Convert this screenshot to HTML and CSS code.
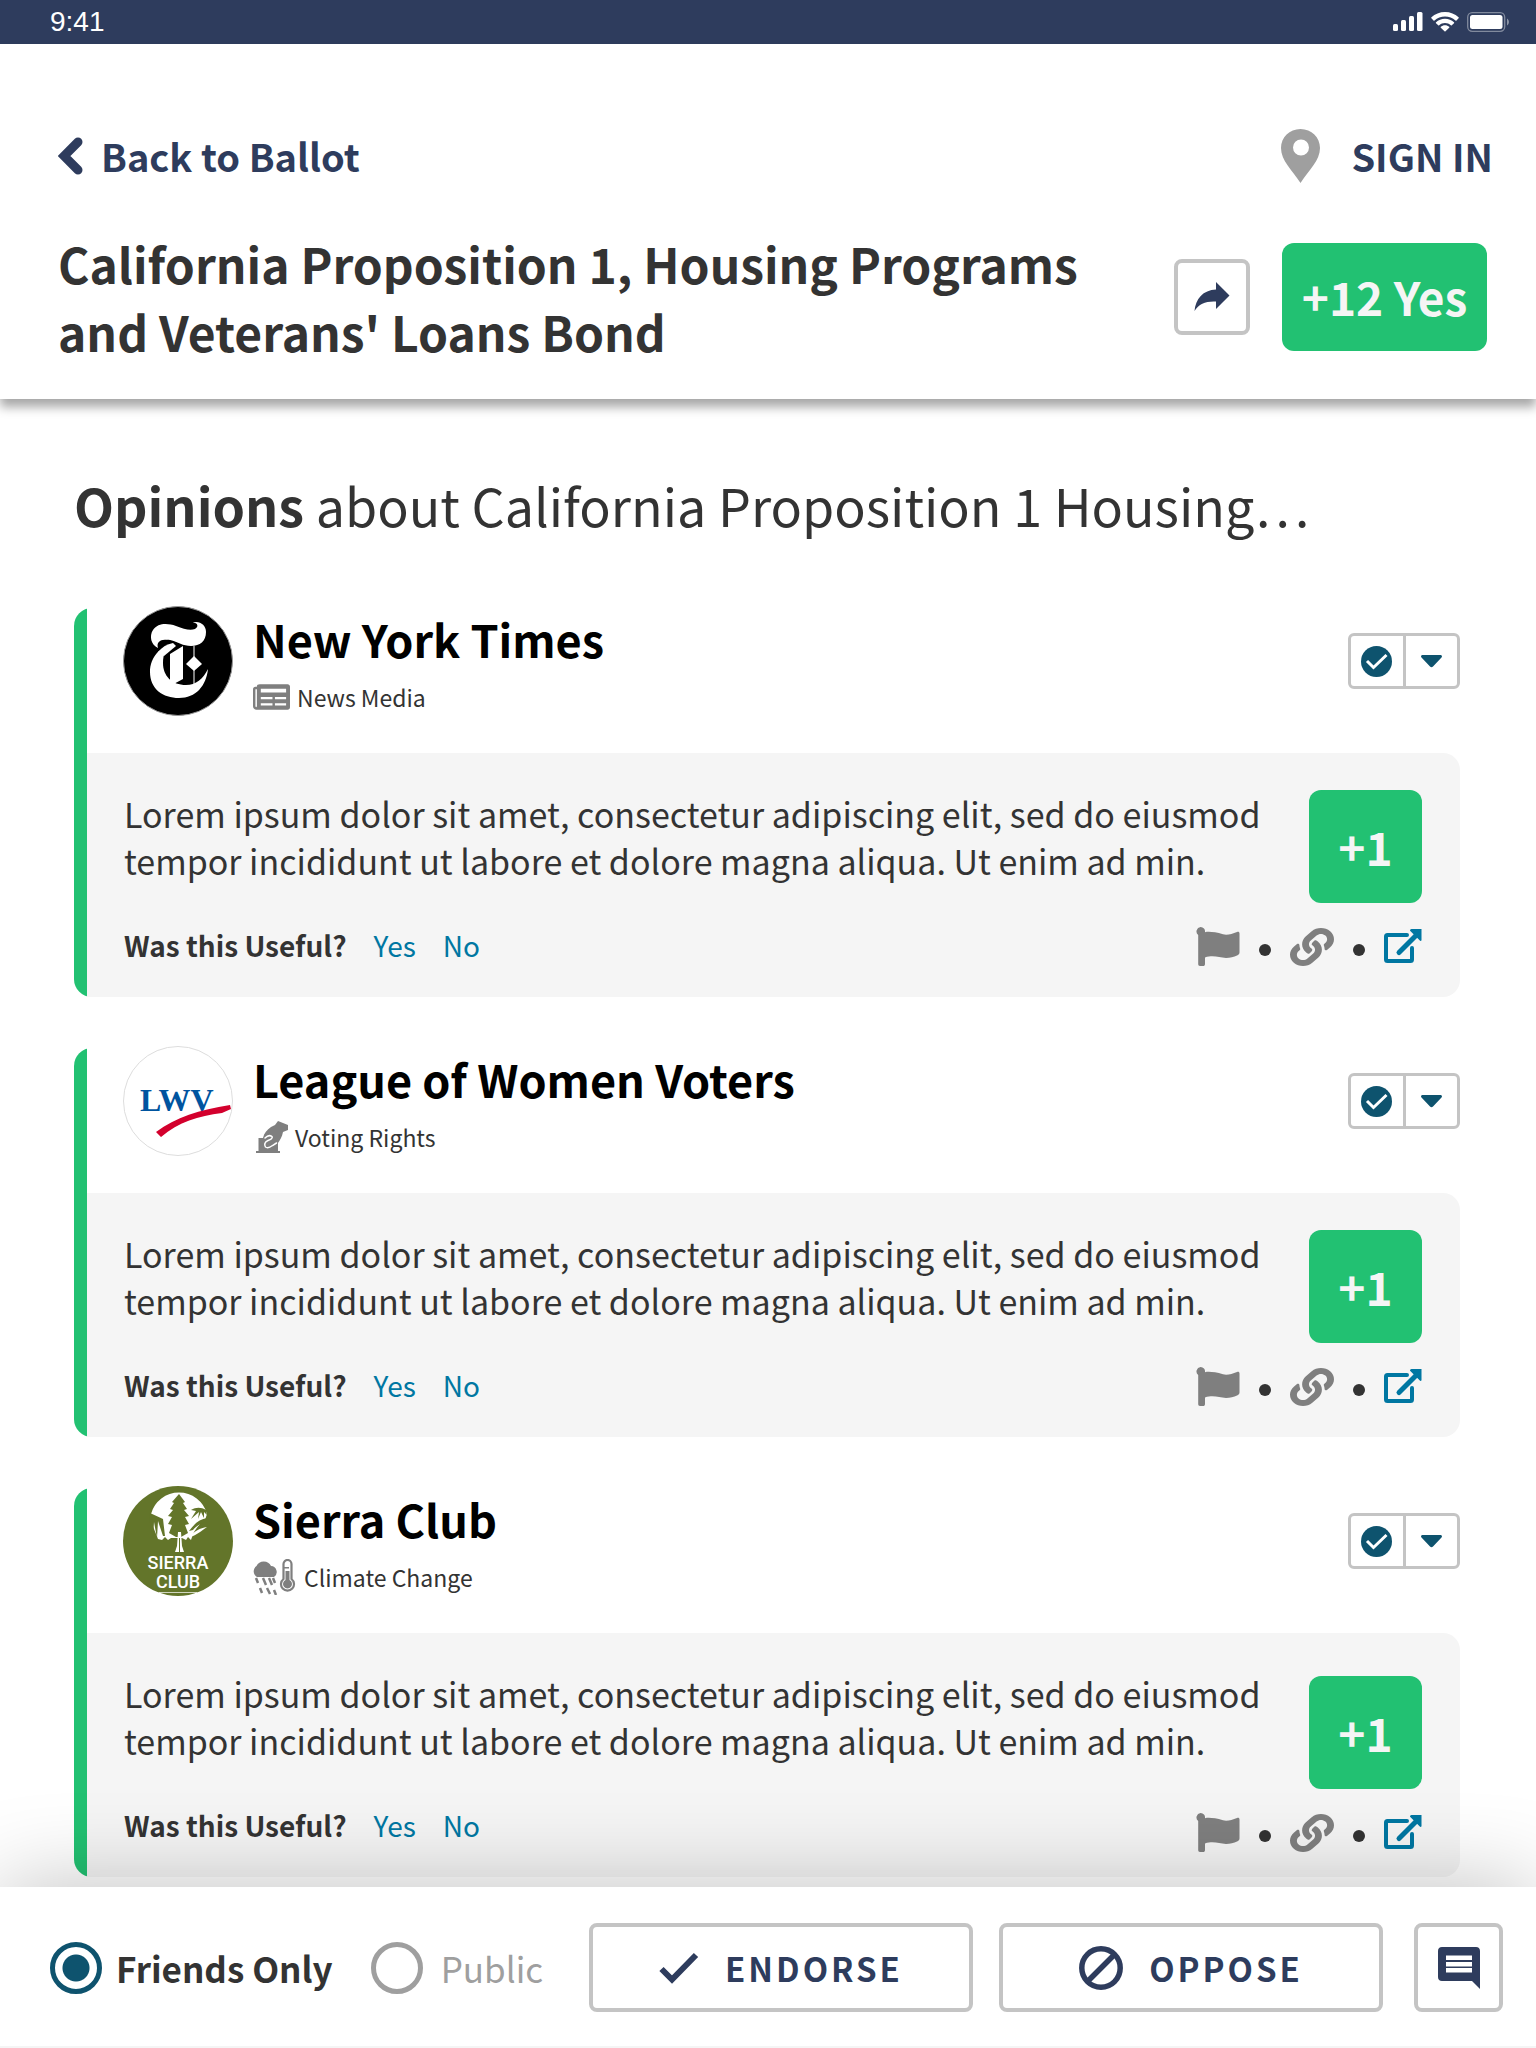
FILE: index.html
```html
<!DOCTYPE html>
<html lang="en">
<head>
<meta charset="utf-8">
<meta name="viewport" content="width=device-width, initial-scale=1">
<title>California Proposition 1</title>
<link rel="stylesheet" href="styles.css">
</head>
<body>
<svg class="sprite" aria-hidden="true">
  <symbol id="i-flag" viewBox="0 0 44 39"><path d="M4.500 0a4.500 4.500 0 0 1 4.500 5.200C13 4.400 19 5 27 7.300c4 1 9-.2 14-2.300 1.500-.5 2.500 0 2.500 1.500V25.500c0 1.500-1 2.300-2.500 3-3 1.500-7 2.400-11 2.400-7-.2-12-3-21-.5V37c0 1.500-.8 2-1.800 2H4c-1.200 0-1.800-.8-1.800-2V8A4.500 4.500 0 0 1 4.500 0z"/></symbol>
  <symbol id="i-link" viewBox="0 0 512 512" preserveAspectRatio="none"><path d="M326.612 185.391c59.747 59.809 58.927 155.698.36 214.59-.11.12-.24.25-.36.37l-67.2 67.2c-59.27 59.27-155.699 59.262-214.96 0-59.27-59.26-59.27-155.7 0-214.96l37.106-37.106c9.840-9.840 26.786-3.300 27.294 10.606.648 17.722 3.826 35.527 9.690 52.721 1.986 5.822.567 12.262-3.783 16.612l-13.087 13.087c-28.026 28.026-28.905 73.660-1.155 101.960 28.024 28.579 74.086 28.749 102.325.510l67.200-67.190c28.191-28.191 28.073-73.757 0-101.830-3.701-3.694-7.429-6.564-10.341-8.569a16.037 16.037 0 0 1-6.947-12.606c-.396-10.567 3.348-21.456 11.698-29.806l21.054-21.055c5.521-5.521 14.182-6.199 20.584-1.731a152.482 152.482 0 0 1 20.522 17.197zM467.547 44.449c-59.261-59.262-155.690-59.270-214.960 0l-67.200 67.200c-.120.120-.250.250-.360.370-58.566 58.892-59.387 154.781.360 214.590a152.454 152.454 0 0 0 20.521 17.196c6.402 4.468 15.064 3.789 20.584-1.731l21.054-21.055c8.350-8.350 12.094-19.239 11.698-29.806a16.037 16.037 0 0 0-6.947-12.606c-2.912-2.005-6.640-4.875-10.341-8.569-28.073-28.073-28.191-73.639 0-101.830l67.200-67.190c28.239-28.239 74.300-28.069 102.325.510 27.750 28.300 26.872 73.934-1.155 101.960l-13.087 13.087c-4.350 4.350-5.769 10.790-3.783 16.612 5.864 17.194 9.042 34.999 9.690 52.721.509 13.906 17.454 20.446 27.294 10.606l37.106-37.106c59.271-59.259 59.271-155.699.001-214.959z"/></symbol>
  <symbol id="i-external" viewBox="0 0 38 35"><path d="M23 6H3.500C2.600 6 2 6.600 2 7.500v23c0 .9.600 1.500 1.500 1.500h23c.9 0 1.500-.6 1.500-1.500V19" fill="none" stroke="currentColor" stroke-width="4" stroke-linecap="round"/><path d="M15 23.500L33 5.500" fill="none" stroke="currentColor" stroke-width="5" stroke-linecap="round"/><path d="M27.500 0H37.500v11c0 1-1 1.300-1.700.6l-9.500-9.500C25.500 1.200 26.500 0 27.500 0z"/></symbol>
  <symbol id="i-check-circle" viewBox="0 0 31 31"><circle cx="15.500" cy="15.500" r="15.500"/><path d="M6 15l6.500 6.500L25.500 9" fill="none" stroke="#fff" stroke-width="3"/></symbol>
  <symbol id="i-caret" viewBox="0 0 21 13"><path d="M1.500 0h18c1.300 0 2 1.500 1 2.500l-8.500 9c-1 1-2 1-3 0L.500 2.500C-.5 1.500.200 0 1.500 0z"/></symbol>
</svg>

<div class="status">
  <span class="status-time">9:41</span>
  <div class="status-icons">
    <svg width="30" height="20" viewBox="0 0 30 20"><rect x="0" y="12" width="5" height="7" rx="1.500"/><rect x="8" y="8" width="5" height="11" rx="1.500"/><rect x="16" y="4" width="5" height="15" rx="1.500"/><rect x="24" y="0" width="5.500" height="19" rx="1.500"/></svg>
    <svg width="28" height="20" viewBox="0 0 28 20"><path d="M14 0c5.300 0 10 2 13.600 5.300.3.300.3.700 0 1L25.500 8.500c-.3.300-.7.300-1 0C21.700 5.900 18 4.400 14 4.400S6.300 5.900 3.500 8.500c-.3.300-.7.300-1 0L.400 6.300c-.3-.3-.3-.7 0-1C4 2 8.700 0 14 0z"/><path d="M14 6.700c3.500 0 6.600 1.300 9 3.500.3.300.3.700 0 1l-2.200 2.100c-.3.300-.7.300-1 0-1.600-1.400-3.600-2.200-5.800-2.200s-4.200.8-5.800 2.200c-.3.300-.7.300-1 0L5 11.200c-.3-.3-.3-.7 0-1 2.400-2.200 5.500-3.500 9-3.500z"/><path d="M14 13.300c1.600 0 3.100.6 4.200 1.500.3.300.3.700 0 1l-3.700 3.500c-.3.300-.7.300-1 0l-3.700-3.500c-.3-.3-.3-.7 0-1 1.100-.9 2.600-1.500 4.200-1.500z"/></svg>
    <svg width="43" height="20" viewBox="0 0 43 20"><rect x=".7" y=".7" width="37" height="18.600" rx="4.500" fill="none" stroke="#fff" stroke-opacity=".4" stroke-width="1.300"/><rect x="3" y="3" width="32.500" height="14" rx="2.500"/><path d="M40 6.500c2.600 1.500 2.600 5.500 0 7z" fill-opacity=".45"/></svg>
  </div>
</div>

<header class="header">
  <nav class="nav">
    <a class="back" href="#ballot"><svg width="25" height="38" viewBox="0 0 25 38"><path d="M20 5L6 19l14 14" fill="none" stroke="currentColor" stroke-width="9" stroke-linecap="round"/></svg>Back to Ballot</a>
    <div class="account">
      <a class="pin" href="#location" aria-label="Location"><svg width="39" height="54" viewBox="0 0 39 54"><path fill-rule="evenodd" d="M19.500 0C30.500 0 39 8.500 39 19c0 12.500-11 22-19.500 35C11 41 0 31.500 0 19 0 8.500 8.500 0 19.500 0zM20 10.500a8 8 0 1 0 0 16 8 8 0 0 0 0-16z"/></svg></a>
      <a href="#signin">SIGN IN</a>
    </div>
  </nav>
  <div class="measure">
    <h1>California Proposition 1, Housing Programs and Veterans' Loans Bond</h1>
    <div class="measure-actions">
      <button class="outline share" type="button" aria-label="Share"><svg width="36" height="30" viewBox="0 0 36 30"><path d="M22 0l13.500 13.500L22 27v-7.500C12 19 5 21.500.500 29 1.500 17 9 8 22 7.500z"/></svg></button>
      <button class="stance" type="button">+12 Yes</button>
    </div>
  </div>
</header>

<main class="main">
  <h2><strong>Opinions</strong> about California Proposition 1 Housing…</h2>

  <article class="opinion">
    <div class="head">
      <svg class="avatar" viewBox="0 0 110 110"><circle cx="55" cy="55" r="54.500" fill="#000" stroke="#999"/><g fill="#fff"><path d="M35 42c-7-3-9-12-5-18 5-7 14-7 23-4 8 3 14 5 19 3 4-2 3-7-3-6 7-3 14 2 14 9 0 9-6 14-15 14-8 0-13-4-21-6-7-1-12 2-12 8z"/><path d="M50 37c-12 3-23 14-23 29 0 17 13 26 29 26 17 0 27-12 29-29-5 10-12 16-22 16-14 0-23-9-23-22 0-9 3-16 10-20z"/><path d="M47 48l13-8v33l-13 7z"/><path d="M71 50l8 8-8 7-8-7z"/><path d="M70.500 40h1v38h-1z"/></g><path d="M35 42c-2-6 3-9 9-8 6 1 8 2 12 4-8 1-14 4-18 9z" fill="#000"/><path d="M50 37c-6 1-11 4-15 9l6 4 12-10z" fill="#fff"/></svg>
      <div class="who">
        <h3>New York Times</h3>
        <p class="topic"><svg width="37" height="26" viewBox="0 0 38 26"><path fill-rule="evenodd" d="M7 0h28.500C37 0 38 1 38 2.500v21C38 25 37 26 35.500 26h-32C1.500 26 0 24.500 0 22.500V5c0-1.500 1-2.500 2.500-2.500H4V2C4 1 5 0 7 0zM2.500 5v17c0 2 1.500 2 1.500 0V5zM8 4.500v4h26v-4zM8 13v2.200h12V13zm14.500 0v2.200H34V13zM8 19.500v2.200h12v-2.200zm14.500 0v2.200H34v-2.200z"/></svg>News Media</p>
      </div>
      <div class="split"><button type="button" aria-label="Following"><svg width="31" height="31"><use href="#i-check-circle"/></svg></button><button type="button" aria-label="More options"><svg width="21" height="13"><use href="#i-caret"/></svg></button></div>
    </div>
    <div class="panel">
      <div class="statement">
        <p>Lorem ipsum dolor sit amet, consectetur adipiscing elit, sed do eiusmod tempor incididunt ut labore et dolore magna aliqua. Ut enim ad min.</p>
        <button class="score" type="button">+1</button>
      </div>
      <div class="feedback">
        <div class="useful"><strong>Was this Useful?</strong><a href="#yes">Yes</a><a href="#no">No</a></div>
        <div class="tools"><a href="#flag" aria-label="Flag"><svg width="44" height="39"><use href="#i-flag"/></svg></a><i></i><a href="#link" aria-label="Copy link"><svg width="44" height="38"><use href="#i-link"/></svg></a><i></i><a class="blue" href="#open" aria-label="Open"><svg width="38" height="35"><use href="#i-external"/></svg></a></div>
      </div>
    </div>
  </article>

  <article class="opinion">
    <div class="head">
      <svg class="avatar" viewBox="0 0 110 110"><circle cx="55" cy="55" r="54.500" fill="#fff" stroke="#ddd"/><text class="lwv" x="17" y="65">LWV</text><path d="M33 86c20-15 43-22 74-27l1 4-9 4c-24 3-43 9-61 24z" fill="#d3002d"/></svg>
      <div class="who">
        <h3>League of Women Voters</h3>
        <p class="topic"><svg width="35" height="32" viewBox="-3 0 35 32"><path d="M0 30h2.500V17H7c1-5 4-8 8-11l4-2 3-4 10 4v5l-5 2c-1 5-3 8-5 11v8h2v2H0z"/><path d="M9 17c2-2 5-3 7-1.500 1 1.500-1 3-4 4C8.500 21 8 24 9.500 26c2 1.500 5 0 7-1.500l4-2.500" fill="none" stroke="#fff" stroke-width="1.500" stroke-linecap="round"/></svg>Voting Rights</p>
      </div>
      <div class="split"><button type="button" aria-label="Following"><svg width="31" height="31"><use href="#i-check-circle"/></svg></button><button type="button" aria-label="More options"><svg width="21" height="13"><use href="#i-caret"/></svg></button></div>
    </div>
    <div class="panel">
      <div class="statement">
        <p>Lorem ipsum dolor sit amet, consectetur adipiscing elit, sed do eiusmod tempor incididunt ut labore et dolore magna aliqua. Ut enim ad min.</p>
        <button class="score" type="button">+1</button>
      </div>
      <div class="feedback">
        <div class="useful"><strong>Was this Useful?</strong><a href="#yes">Yes</a><a href="#no">No</a></div>
        <div class="tools"><a href="#flag" aria-label="Flag"><svg width="44" height="39"><use href="#i-flag"/></svg></a><i></i><a href="#link" aria-label="Copy link"><svg width="44" height="38"><use href="#i-link"/></svg></a><i></i><a class="blue" href="#open" aria-label="Open"><svg width="38" height="35"><use href="#i-external"/></svg></a></div>
      </div>
    </div>
  </article>

  <article class="opinion">
    <div class="head">
      <svg class="avatar" viewBox="0 0 110 110"><circle cx="55" cy="55" r="55" fill="#63752a"/><path d="M28 28a29 29 0 0 1 56 0l-2 6c-4 2-9 8-12 14l-2 6-3-3-2 3-4-2H48l-3 2-3-3-3 3-4-1-8-20z" fill="#fff"/><path d="M27 27l13 6 2 17h-2l-5-15-1 17-3-16-1 16-4-20zM83 24c-5-3-10-3-15 0l5 1-5 8 8-7-1 7 3-7 3 6 0-6 3 3zM84 32c-7 1-12 5-18 13l4-1c4-5 9-7 14-8z" fill="#63752a"/><path d="M67 51c4-6 10-9 17-10-6 4-10 8-17 10z" fill="#fff"/><path d="M56 8l6 8-2 1 4 6-3 1 5 6-4 1 4 7-4 1 3 8-7 4h-5l-7-4 3-8-4-1 4-7-4-1 5-6-3-1 4-6-2-1z" fill="#63752a"/><path d="M55 46h3l1 14 2 6h-9l2-6z" fill="#fff"/><path d="M56.500 52v14" stroke="#63752a"/><g class="sierra"><text x="55" y="83">SIERRA</text><text x="55" y="102">CLUB</text></g><path d="M36 106.500h38" stroke="#fff" stroke-width=".7"/></svg>
      <div class="who">
        <h3>Sierra Club</h3>
        <p class="topic"><svg width="44" height="36" viewBox="2 0 44 36"><path d="M6 18a6.500 6.500 0 0 1-.500-11A8 8 0 0 1 20 7a6 6 0 0 1 3 11z"/><path d="M5 19l2 5M12 19l3 7M18 19l3 7M22 19l2 5M9 29l2 5M16 29l3 6M23 31l2 5" stroke="currentColor" stroke-width="2.500"/><path d="M32.500 20V5a4 4 0 0 1 8 0v15a6.500 6.500 0 1 1-8 0z" fill="none" stroke="currentColor" stroke-width="2.200"/><path d="M34.500 21V12h4v9a4.500 4.500 0 1 1-4 0zM33 8h5v1.500h-5z"/></svg>Climate Change</p>
      </div>
      <div class="split"><button type="button" aria-label="Following"><svg width="31" height="31"><use href="#i-check-circle"/></svg></button><button type="button" aria-label="More options"><svg width="21" height="13"><use href="#i-caret"/></svg></button></div>
    </div>
    <div class="panel panel-low">
      <div class="statement">
        <p>Lorem ipsum dolor sit amet, consectetur adipiscing elit, sed do eiusmod tempor incididunt ut labore et dolore magna aliqua. Ut enim ad min.</p>
        <button class="score" type="button">+1</button>
      </div>
      <div class="feedback">
        <div class="useful"><strong>Was this Useful?</strong><a href="#yes">Yes</a><a href="#no">No</a></div>
        <div class="tools"><a href="#flag" aria-label="Flag"><svg width="44" height="39"><use href="#i-flag"/></svg></a><i></i><a href="#link" aria-label="Copy link"><svg width="44" height="38"><use href="#i-link"/></svg></a><i></i><a class="blue" href="#open" aria-label="Open"><svg width="38" height="35"><use href="#i-external"/></svg></a></div>
      </div>
    </div>
  </article>
</main>

<footer class="footer">
  <div class="audience">
    <label><input type="radio" name="audience" checked><span>Friends Only</span></label>
    <label><input type="radio" name="audience"><span>Public</span></label>
  </div>
  <div class="actions">
    <button class="outline vote" type="button"><svg width="40" height="32" viewBox="0 0 40 32"><path d="M2.500 17l10.500 10.500L37 3" fill="none" stroke="currentColor" stroke-width="6"/></svg>ENDORSE</button>
    <button class="outline vote" type="button"><svg width="44" height="44" viewBox="0 0 44 44"><g fill="none" stroke="currentColor" stroke-width="5.500"><circle cx="22" cy="22" r="19.200"/><path d="M9 35L35 9"/></g></svg>OPPOSE</button>
  </div>
  <button class="outline chat" type="button" aria-label="Comment"><svg width="42" height="42" viewBox="0 0 42 42"><path fill-rule="evenodd" d="M4 0h34c2.500 0 4 1.500 4 4v38l-8-8H4c-2.500 0-4-1.500-4-4V4c0-2.500 1.500-4 4-4zM8 8.500v4.500h26V8.500zM8 15v4.500h26V15zM8 21v4.500h26V21z"/></svg></button>
</footer>
</body>
</html>
```
FILE: styles.css
```css
* { box-sizing: border-box; }

body {
  margin: 0;
  min-height: 100vh;
  display: flex;
  flex-direction: column;
  background: #fff;
  color: #333;
  font-family: "Noto Sans CJK SC", sans-serif;
}

h1, h2, h3, p { margin: 0; }
a { color: inherit; text-decoration: none; }
button { margin: 0; padding: 0; border: 0; background: none; font-family: inherit; cursor: pointer; }
svg { flex: none; fill: currentColor; }
.sprite { display: none; }

/* Status bar */
.status {
  height: 44px;
  padding: 0 26px 0 50px;
  display: flex;
  align-items: center;
  justify-content: space-between;
  background: #2e3c5d;
  color: #fff;
}
.status-time { font: 28px/32px "Liberation Sans", Arial, sans-serif; }
.status-icons { display: flex; align-items: center; gap: 8px; }

/* Header */
.header {
  position: relative;
  padding: 80px 43px 34px 58px;
  box-shadow: 0 8px 10px rgba(0, 0, 0, .35);
}
.nav {
  display: flex;
  align-items: center;
  justify-content: space-between;
  color: #2e3c5d;
  font-size: 38px;
  line-height: 64px;
  font-weight: 700;
}
.back { display: flex; align-items: center; gap: 18px; }
.account { display: flex; align-items: center; gap: 31px; }
.pin { display: flex; color: #9f9f9f; }
.measure {
  display: flex;
  align-items: center;
  justify-content: space-between;
  padding: 41px 6px 0 0;
}
h1 { max-width: 1060px; font-size: 48px; line-height: 68px; font-weight: 700; }
.measure-actions { display: flex; align-items: center; gap: 32px; }
.outline {
  border: 4px solid #c4c4c4;
  border-radius: 8px;
  background: #fff;
  color: #2e3c5d;
  display: flex;
  align-items: center;
  justify-content: center;
}
.share { width: 76px; height: 76px; }
.stance, .score {
  padding-bottom: 2px;
  border-radius: 12px;
  background: #22c172;
  color: #f5f5f5;
  font-size: 46px;
  line-height: 64px;
  font-weight: 700;
}
.stance { width: 205px; height: 108px; }

/* Opinions */
.main { flex: 1; padding: 68px 76px 10px 74px; }
h2 { margin-bottom: 65px; font-size: 52px; line-height: 76px; font-weight: 400; }
.opinion {
  border-radius: 18px;
  background: linear-gradient(90deg, #22c172 13px, transparent 13px);
}
.opinion + .opinion { margin-top: 51px; }
.head {
  display: flex;
  align-items: flex-start;
  height: 145px;
  padding-left: 49px;
}
.avatar { width: 110px; height: 110px; margin-top: -2px; }
.lwv { font: 700 32px "Liberation Serif", serif; fill: #00549f; }
.sierra { font: 500 18px Roboto, sans-serif; fill: #fff; text-anchor: middle; }
.who { flex: 1; padding-left: 20px; }
h3 { color: #000; font-size: 45px; line-height: 62px; font-weight: 700; }
.topic { display: flex; align-items: center; gap: 7px; margin-top: 3px; font-size: 23px; line-height: 48px; }
.topic svg { color: #7f7f7f; }
.split {
  display: flex;
  width: 112px;
  height: 56px;
  margin-top: 25px;
  border: 3px solid #c4c4c4;
  border-radius: 6px;
  color: #0e536e;
}
.split button { flex: 1; display: flex; align-items: center; justify-content: center; color: inherit; }
.split button + button { border-left: 3px solid #c4c4c4; }
.panel {
  min-height: 244px;
  margin-left: 13px;
  padding: 37px 38px 20px 37px;
  border-radius: 0 17px 17px 0;
  background: #f5f5f5;
}
.statement, .feedback { display: flex; align-items: flex-start; justify-content: space-between; }
.statement p { max-width: 1150px; font-size: 34px; line-height: 47px; }
.score { flex: none; width: 113px; height: 113px; }
.feedback { margin-top: 18px; }
.useful { display: flex; gap: 27px; font-size: 28px; line-height: 48px; }
.useful a, .tools .blue { color: #0077a2; }
.tools { display: flex; align-items: center; height: 39px; margin-top: 6px; color: #7f7f7f; }
.tools a { display: flex; }
.tools i { width: 12px; height: 12px; margin: 6px 19px 0; border-radius: 50%; background: #333; }
.panel-low .score { margin: 6px 0 -6px; }
.panel-low .tools { margin-top: 12px; }

/* Footer */
.footer {
  position: sticky;
  bottom: 0;
  display: flex;
  align-items: center;
  gap: 31px;
  padding: 36px 33px 34px 50px;
  border-bottom: 2px solid #f5f5f5;
  background: #fff;
  box-shadow: 0 0 90px rgba(0, 0, 0, .25);
}
.audience { display: flex; gap: 38px; font-size: 35px; line-height: 52px; white-space: nowrap; }
.audience label { display: flex; align-items: center; gap: 14px; }
.audience label + label { gap: 18px; }
.audience input {
  appearance: none;
  width: 52px;
  height: 52px;
  margin: 0;
  border: 5px solid #9f9f9f;
  border-radius: 50%;
}
.audience input:checked {
  border-color: #0e536e;
  background: radial-gradient(circle, #0e536e 13px, transparent 14px);
}
.audience span { color: #9f9f9f; }
.audience input:checked + span { color: #333; font-weight: 700; }
.actions { flex: 1; display: flex; justify-content: flex-end; gap: 26px; }
.vote {
  flex: 0 1 384px;
  height: 89px;
  gap: 26px;
  font-size: 33px;
  line-height: 48px;
  font-weight: 700;
  letter-spacing: 3px;
}
.chat { width: 89px; height: 89px; }
```
